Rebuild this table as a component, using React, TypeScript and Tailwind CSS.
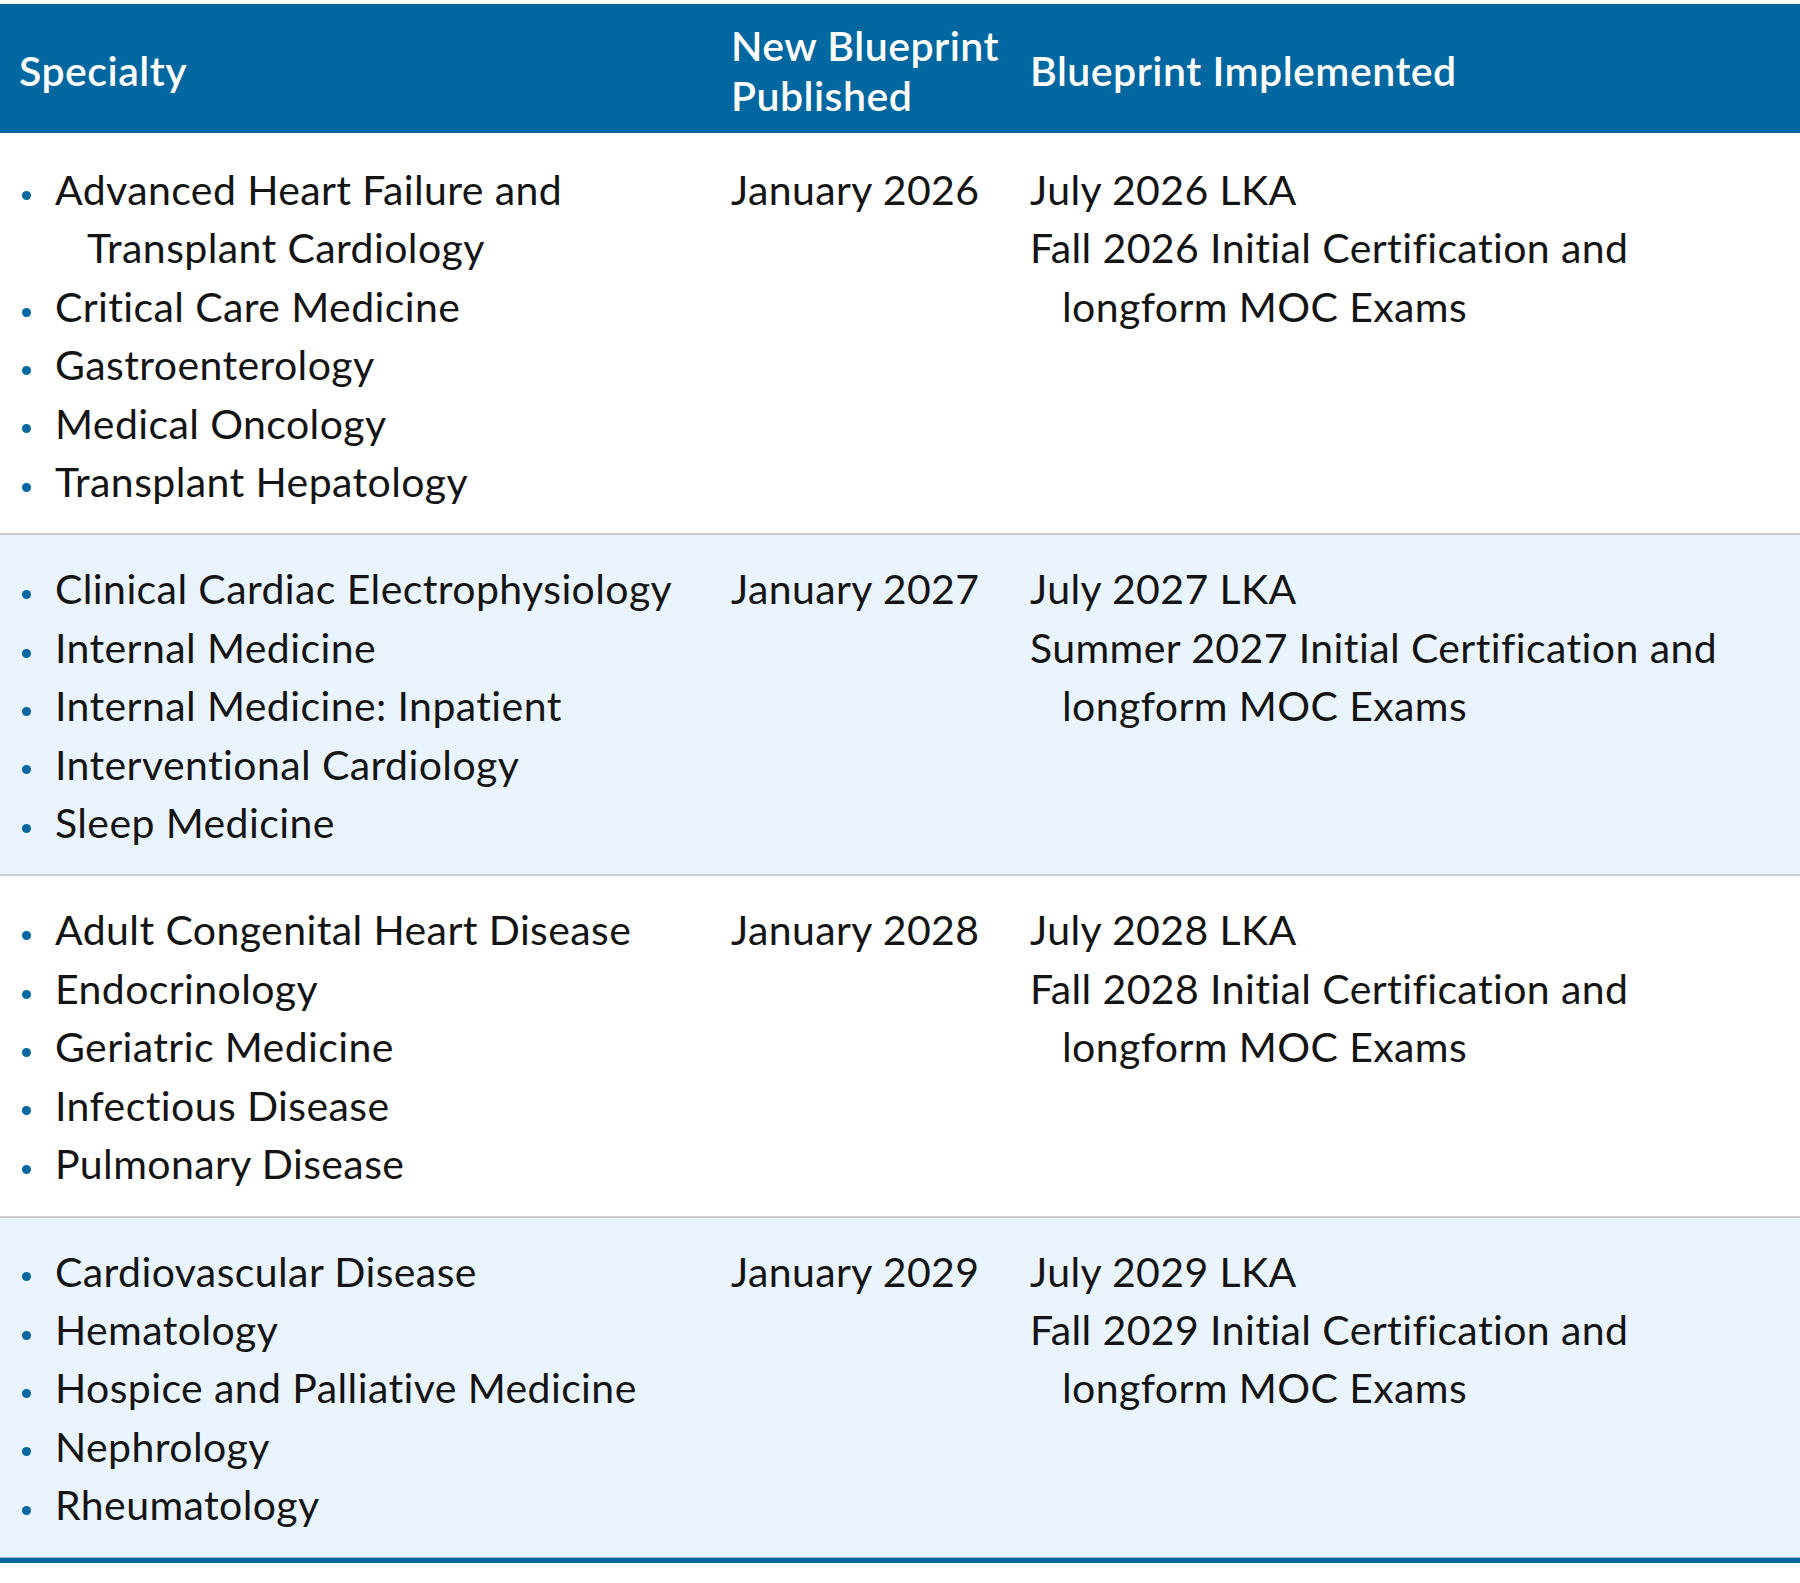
import React from "react"

type Row = {
  specialties: string[][]
  published: string
  implemented: string[][]
}

const rows: Row[] = [
  {
    specialties: [
      ["Advanced Heart Failure and", "Transplant Cardiology"],
      ["Critical Care Medicine"],
      ["Gastroenterology"],
      ["Medical Oncology"],
      ["Transplant Hepatology"],
    ],
    published: "January 2026",
    implemented: [["July 2026 LKA"], ["Fall 2026 Initial Certification and", "longform MOC Exams"]],
  },
  {
    specialties: [
      ["Clinical Cardiac Electrophysiology"],
      ["Internal Medicine"],
      ["Internal Medicine: Inpatient"],
      ["Interventional Cardiology"],
      ["Sleep Medicine"],
    ],
    published: "January 2027",
    implemented: [["July 2027 LKA"], ["Summer 2027 Initial Certification and", "longform MOC Exams"]],
  },
  {
    specialties: [
      ["Adult Congenital Heart Disease"],
      ["Endocrinology"],
      ["Geriatric Medicine"],
      ["Infectious Disease"],
      ["Pulmonary Disease"],
    ],
    published: "January 2028",
    implemented: [["July 2028 LKA"], ["Fall 2028 Initial Certification and", "longform MOC Exams"]],
  },
  {
    specialties: [
      ["Cardiovascular Disease"],
      ["Hematology"],
      ["Hospice and Palliative Medicine"],
      ["Nephrology"],
      ["Rheumatology"],
    ],
    published: "January 2029",
    implemented: [["July 2029 LKA"], ["Fall 2029 Initial Certification and", "longform MOC Exams"]],
  },
]

// lines after the first one sit a bit further in (hanging indent)
function Lines({ lines }: { lines: string[] }) {
  return (
    <div className="pl-[32px] [text-indent:-32px]">
      {lines.map((l, i) => (
        <React.Fragment key={i}>
          {i > 0 && <br />}
          {l}
        </React.Fragment>
      ))}
    </div>
  )
}

export default function App() {
  return (
    <div className="w-[1800px] bg-white pt-1 font-['Lato',sans-serif] text-[41px] tracking-[0.4px] text-[#141414]">
      {/* header */}
      <div className="grid h-[129px] grid-cols-[712px_320px_1fr] items-center bg-[#0167a0] pt-[17px] pb-[12px] font-semibold leading-[50px] tracking-[0.5px] text-white">
        <div className="pl-[19px]">Specialty</div>
        <div className="pl-[19px]">
          New Blueprint
          <br />
          Published
        </div>
        <div className="-ml-[2px]">Blueprint Implemented</div>
      </div>

      {rows.map((row, idx) => (
        <div
          key={row.published}
          className={`grid grid-cols-[712px_320px_1fr] pb-[22px] leading-[58.4px] ${
            idx % 2 === 1 ? "bg-[#eaf4fe]" : "bg-white"
          } ${idx === 0 ? "pt-[28px]" : "border-t-2 border-[#cccccc] pt-[25px]"}`}
        >
          <ul>
            {row.specialties.map((s) => (
              <li key={s[0]} className="flex items-start">
                <span className="flex h-[58.4px] w-[55px] shrink-0 items-center pl-[22px] pt-[10px]">
                  <span className="size-[9px] rounded-full bg-[#0167a0]" />
                </span>
                <Lines lines={s} />
              </li>
            ))}
          </ul>
          <div className="pl-[19px]">{row.published}</div>
          <div className="-ml-[2px]">
            {row.implemented.map((l) => (
              <Lines key={l[0]} lines={l} />
            ))}
          </div>
        </div>
      ))}

      {/* bottom rule */}
      <div className="border-t border-[#8db4d1]">
        <div className="h-[5px] bg-[#0167a0]" />
      </div>
    </div>
  )
}
